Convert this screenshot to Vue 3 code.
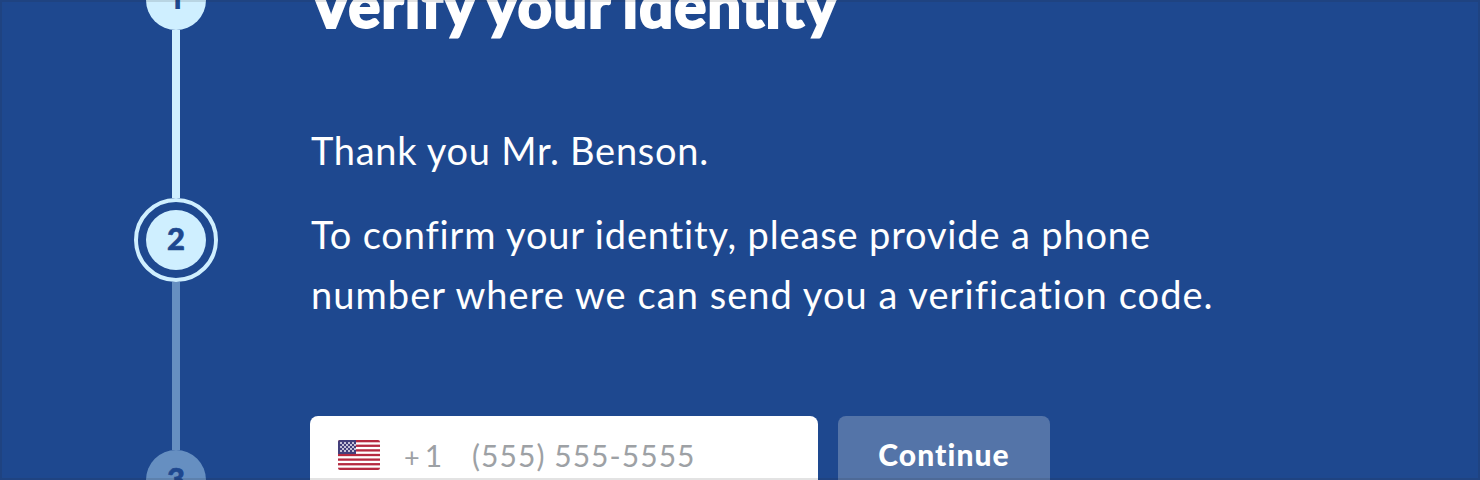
<script setup>
const stripes = [0, 2, 4, 6, 8, 10, 12]
const stars = []
for (let r = 0; r < 5; r++) {
  for (let c = 0; c < 8; c++) {
    if ((r + c) % 2 === 0) stars.push({ x: 2 + c * 2, y: 2 + r * 2 })
  }
}
</script>

<template>
  <main class="page">
    <nav class="rail">
      <div class="dot first">1</div>
      <div class="bar"></div>
      <div class="ring"><div class="dot">2</div></div>
      <div class="bar muted"></div>
      <div class="dot next">3</div>
    </nav>
    <section class="content">
      <h1>Verify your identity</h1>
      <p class="thanks">Thank you Mr. Benson.</p>
      <p class="line one">To confirm your identity, please provide a phone</p>
      <p class="line two">number where we can send you a verification code.</p>
      <form class="form" @submit.prevent>
        <div class="field">
          <svg class="flag" width="42" height="30" viewBox="0 0 42 30">
            <defs><clipPath id="flagShape"><rect width="42" height="30" rx="2" /></clipPath></defs>
            <g clip-path="url(#flagShape)">
              <rect width="42" height="30" fill="#fff" />
              <rect v-for="s in stripes" :key="s" x="0" :y="s * 30 / 13" width="42" :height="30 / 13" fill="#b52a40" />
              <rect width="18" height="14" fill="#43407c" />
              <rect v-for="(s, i) in stars" :key="i" :x="s.x" :y="s.y" width="2" height="2" fill="#c3c0d6" />
            </g>
          </svg>
          <span class="code"><span class="plus">+</span>1</span>
          <span class="phone">(555) 555-5555</span>
        </div>
        <button class="go">Continue</button>
      </form>
    </section>
    <div class="edge"></div>
  </main>
</template>

<style>
body { margin: 0; background: #1e488f; }
</style>

<style scoped>
.page {
  position: relative;
  width: 1480px;
  height: 480px;
  overflow: hidden;
  display: flex;
  background: #1e488f;
  color: #fff;
  font-family: Lato, "Open Sans", sans-serif;
}
.rail {
  width: 84px;
  flex: none;
  margin: -30px 0 0 134px;
  display: flex;
  flex-direction: column;
  align-items: center;
}
.dot {
  box-sizing: border-box;
  width: 60px;
  height: 60px;
  flex: none;
  border-radius: 50%;
  background: #cfefff;
  color: #1e488f;
  font: 900 31px/57px Lato, sans-serif;
  -webkit-text-stroke: 0.6px #1e488f;
  text-align: center;
}
.dot.first {
  font: 700 30px/56px "Open Sans", sans-serif;
  -webkit-text-stroke: 0;
}
.bar { width: 8px; height: 168px; flex: none; background: #cfefff; }
.bar.muted { background: #668fc1; }
.dot.next { background: #668fc1; }
.ring {
  box-sizing: border-box;
  width: 84px;
  height: 84px;
  flex: none;
  padding: 8px;
  border: 4px solid #cfefff;
  border-radius: 50%;
}
.content { flex: none; width: 1000px; margin-left: 92px; white-space: nowrap; }
h1 {
  margin: -35px 0 0;
  height: 80px;
  font-size: 60px;
  line-height: 80px;
  font-weight: 900;
  letter-spacing: 0.9px;
  word-spacing: -3px;
  -webkit-text-stroke: 1.8px #fff;
}
p {
  margin: 0;
  padding-left: 1px;
  font-size: 38px;
  line-height: 60px;
  font-weight: 400;
}
.thanks { margin-top: 75px; letter-spacing: 0.72px; }
.one { margin-top: 24px; letter-spacing: 0.85px; }
.two { letter-spacing: 1.06px; }
.form { display: flex; gap: 20px; margin-top: 92px; }
.field {
  box-sizing: border-box;
  width: 508px;
  height: 80px;
  padding: 0 28px;
  display: flex;
  align-items: center;
  border-radius: 8px;
  background: #fff;
  color: #9da1a5;
  font-size: 30px;
}
.flag { flex: none; margin-top: -3px; }
.code { width: 42px; margin: -3px 0 0 24px; }
.plus { margin-right: 5px; font-size: 27px; }
.phone { margin: -3px 0 0 26px; letter-spacing: 1.05px; }
.go {
  width: 212px;
  height: 80px;
  padding: 0 0 3px;
  border: 0;
  border-radius: 8px;
  background: #5474a8;
  color: #fff;
  font: 900 30px/77px Lato, sans-serif;
  font-variant-ligatures: none;
  letter-spacing: 1.1px;
}
.edge {
  position: absolute;
  inset: 0;
  border: 2px solid rgba(35, 35, 35, 0.13);
  pointer-events: none;
}
</style>
